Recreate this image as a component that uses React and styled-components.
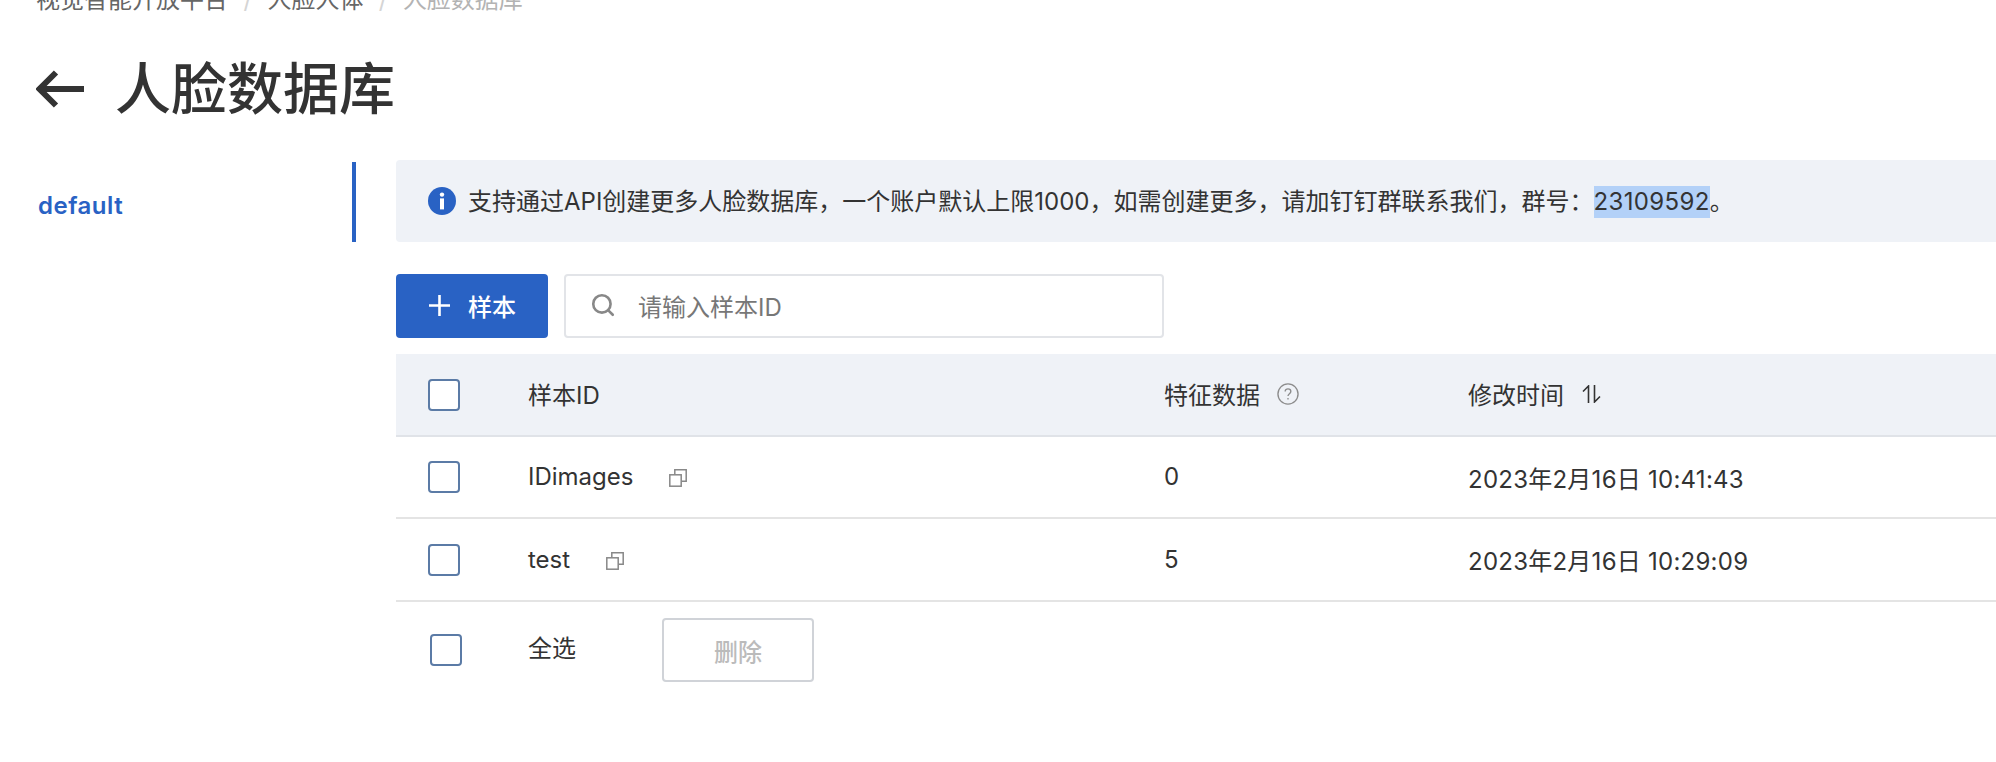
import React from 'react';
import styled, { createGlobalStyle } from 'styled-components';
import { Search } from 'lucide-react';

const GlobalStyle = createGlobalStyle`
  html, body {
    margin: 0;
    padding: 0;
    background: #fff;
    overflow: hidden;
  }
  body {
    font-family: Inter, "Noto Sans CJK SC", sans-serif;
    color: #333;
    font-size: 24px;
  }
`;

const Page = styled.div`
  width: 1996px;
  height: 762px;
  overflow: hidden;
  padding-left: 36px;
  box-sizing: border-box;
`;

const Breadcrumb = styled.nav`
  display: flex;
  align-items: center;
  height: 32px;
  margin-top: -16px;
  line-height: 32px;
  font-size: 24px;
  color: #666;
`;

const Crumb = styled.span`
  color: ${(p) => (p.$current ? '#b3b3b3' : '#666')};
`;

const Slash = styled.span`
  margin: 0 15.4px;
  color: #d5d5d5;
`;

const TitleRow = styled.header`
  display: flex;
  align-items: center;
  height: 84px;
  margin-top: 31px;
  gap: 31px;
`;

const BackArrow = styled.svg`
  width: 48px;
  height: 38px;
  flex: none;
`;

const Title = styled.h1`
  margin: 0;
  font-size: 56px;
  font-weight: 500;
  line-height: 84px;
  color: #333;
`;

const Body = styled.div`
  display: flex;
  margin-top: 29px;
`;

const Sidebar = styled.aside`
  width: 320px;
  flex: none;
`;

const Tab = styled.div`
  height: 80px;
  margin-top: 2px;
  padding: 7px 0 0 2px;
  border-right: 4px solid #2962c4;
  box-sizing: border-box;
  display: flex;
  align-items: center;
  font-size: 24px;
  font-weight: 600;
  letter-spacing: 0.5px;
  color: #2962c4;
`;

const Main = styled.main`
  margin-left: 40px;
  flex: 1;
  min-width: 0;
`;

const Alert = styled.div`
  height: 82px;
  padding-left: 32px;
  display: flex;
  align-items: center;
  gap: 12px;
  background: #eff2f7;
  border-radius: 4px 0 0 4px;
  white-space: nowrap;
`;

const AlertText = styled.span`
  margin-bottom: 2px;
`;

const Selected = styled.span`
  display: inline-block;
  height: 32px;
  line-height: 32px;
  letter-spacing: 0.35px;
  background: #b3d1f8;
`;

const Toolbar = styled.div`
  display: flex;
  gap: 16px;
  margin-top: 32px;
`;

const PrimaryButton = styled.button`
  width: 152px;
  height: 64px;
  padding: 0 0 2px 33px;
  display: flex;
  align-items: center;
  gap: 18px;
  border: 0;
  border-radius: 4px;
  background: #2962c4;
  color: #fff;
  font: 500 24px Inter, "Noto Sans CJK SC", sans-serif;
`;

const SearchBox = styled.div`
  width: 600px;
  height: 64px;
  box-sizing: border-box;
  padding: 0 0 2px 24px;
  display: flex;
  align-items: center;
  gap: 22px;
  border: 2px solid #e2e4e8;
  border-radius: 4px;
  color: #777;
`;

const Table = styled.div`
  margin-top: 16px;
`;

const Row = styled.div`
  display: grid;
  grid-template-columns: 132px 636px 304px 1fr;
  align-items: center;
  height: ${(p) => p.$height}px;
  box-sizing: border-box;
  background: ${(p) => (p.$head ? '#eff2f7' : '#fff')};
  border-bottom: 2px solid ${(p) => (p.$head ? '#e0e3e8' : '#e4e4e4')};
`;

const CheckCell = styled.div`
  padding-left: 32px;
  display: flex;
`;

const Checkbox = styled.span`
  display: block;
  width: 32px;
  height: 32px;
  box-sizing: border-box;
  border: 2px solid #5b7ba6;
  border-radius: 4px;
  background: #fff;
`;

const Cell = styled.div`
  display: flex;
  align-items: center;
  gap: ${(p) => p.$gap || 0}px;
  padding-bottom: ${(p) => p.$lift || 0}px;
  letter-spacing: ${(p) => p.$spacing || 0}px;
  white-space: nowrap;
`;

const CopyGlyph = styled.svg`
  width: 18px;
  height: 18px;
  margin-top: 3px;
  fill: none;
  stroke: #888;
  stroke-width: 1.5;
`;

const Footer = styled.div`
  display: flex;
  align-items: center;
  height: 64px;
  margin-top: 16px;
  padding-left: 34px;
`;

const SelectAll = styled.span`
  width: 48px;
  margin: 0 86px 8px 66px;
`;

const DeleteButton = styled.button`
  width: 152px;
  height: 64px;
  background: #fff;
  border: 2px solid #d0d3d8;
  border-radius: 4px;
  color: #bbb;
  font: 500 24px Inter, "Noto Sans CJK SC", sans-serif;
`;

const InfoIcon = () => (
  <svg width="28" height="28" viewBox="0 0 28 28" style={{ flex: 'none' }}>
    <circle cx="14" cy="14" r="14" fill="#2962c4" />
    <circle cx="14" cy="7.6" r="2.2" fill="#fff" />
    <rect x="12" y="11.4" width="4" height="11" fill="#fff" />
  </svg>
);

const PlusIcon = () => (
  <svg width="21" height="21" viewBox="0 0 21 21" style={{ flex: 'none' }}>
    <path d="M10.5 0v21M0 10.5h21" stroke="#fff" strokeWidth="2.6" />
  </svg>
);

const CopyIcon = () => (
  <CopyGlyph viewBox="0 0 18 18">
    <rect x="0.8" y="5.8" width="11.4" height="11.4" />
    <path d="M5.8 5.5V0.8h11.4v11.4h-4.7" />
  </CopyGlyph>
);

const HelpIcon = () => (
  <svg width="22" height="22" viewBox="0 0 21 21" fill="none" stroke="#8c8c8c" strokeWidth="1.3">
    <circle cx="10.5" cy="10.5" r="9.6" />
    <path d="M7.8 8.2c0-1.6 1.2-2.6 2.7-2.6s2.7 1 2.7 2.4c0 2.2-2.7 2.2-2.7 4.4" />
    <path d="M10.5 14.2v1.6" />
  </svg>
);

const SortIcon = () => (
  <svg width="19" height="18" viewBox="0 0 19 18" fill="none" stroke="#333" strokeWidth="1.6">
    <path d="M6.5 18V1L1 6.5" />
    <path d="M12.5 0v17L18 11.5" />
  </svg>
);

const rows = [
  { id: 'IDimages', count: 0, time: '2023年2月16日 10:41:43', height: 82, lift: 2 },
  { id: 'test', count: 5, time: '2023年2月16日 10:29:09', height: 83, lift: 0 },
];

export default function App() {
  return (
    <Page>
      <GlobalStyle />
      <Breadcrumb>
        <Crumb>视觉智能开放平台</Crumb>
        <Slash>/</Slash>
        <Crumb>人脸人体</Crumb>
        <Slash>/</Slash>
        <Crumb $current>人脸数据库</Crumb>
      </Breadcrumb>

      <TitleRow>
        <BackArrow viewBox="0 0 48 38" fill="none" stroke="#333" strokeWidth="6">
          <path d="M48 19H4M20 2.5L3.5 19 20 35.5" />
        </BackArrow>
        <Title>人脸数据库</Title>
      </TitleRow>

      <Body>
        <Sidebar>
          <Tab>default</Tab>
        </Sidebar>
        <Main>
          <Alert>
            <InfoIcon />
            <AlertText>
              支持通过API创建更多人脸数据库，一个账户默认上限1000，如需创建更多，请加钉钉群联系我们，群号：
              <Selected>23109592</Selected>。
            </AlertText>
          </Alert>

          <Toolbar>
            <PrimaryButton>
              <PlusIcon />
              样本
            </PrimaryButton>
            <SearchBox>
              <Search size={26} color="#888" strokeWidth={2.4} />
              请输入样本ID
            </SearchBox>
          </Toolbar>

          <Table>
            <Row $head $height={83}>
              <CheckCell>
                <Checkbox />
              </CheckCell>
              <Cell $lift={2}>样本ID</Cell>
              <Cell $lift={2} $gap={17}>
                特征数据
                <HelpIcon />
              </Cell>
              <Cell $lift={2} $gap={18}>
                修改时间
                <SortIcon />
              </Cell>
            </Row>
            {rows.map((row) => (
              <Row key={row.id} $height={row.height}>
                <CheckCell>
                  <Checkbox />
                </CheckCell>
                <Cell $gap={36} $lift={row.lift}>
                  {row.id}
                  <CopyIcon />
                </Cell>
                <Cell $lift={row.lift}>{row.count}</Cell>
                <Cell $spacing={0.25}>{row.time}</Cell>
              </Row>
            ))}
          </Table>

          <Footer>
            <Checkbox />
            <SelectAll>全选</SelectAll>
            <DeleteButton>删除</DeleteButton>
          </Footer>
        </Main>
      </Body>
    </Page>
  );
}
